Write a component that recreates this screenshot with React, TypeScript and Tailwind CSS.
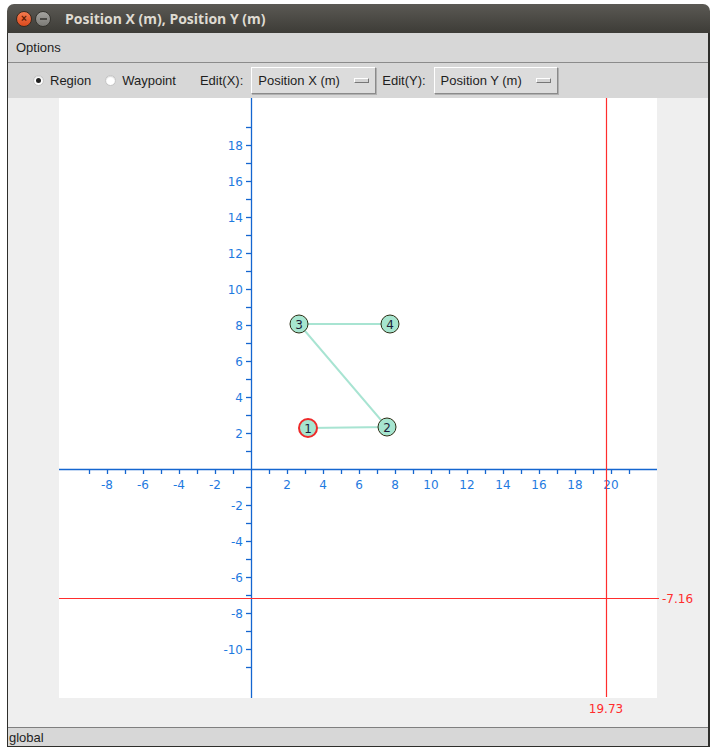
import React from "react";

const S = 18;
const OX = 251;
const OY = 469;
const px = (v: number) => OX + v * S;
const py = (v: number) => OY - v * S;

const nodes = [
  { id: 1, x: 308, y: 428, sel: true },
  { id: 2, x: 387, y: 427, sel: false },
  { id: 3, x: 299, y: 324, sel: false },
  { id: 4, x: 390, y: 324, sel: false },
];

function Chart() {
  const xt: number[] = [];
  for (let i = -9; i <= 21; i++) xt.push(i);
  const yt: number[] = [];
  for (let i = -11; i <= 19; i++) yt.push(i);
  const xl = [-8, -6, -4, -2, 2, 4, 6, 8, 10, 12, 14, 16, 18, 20];
  const yl = [-10, -8, -6, -4, -2, 2, 4, 6, 8, 10, 12, 14, 16, 18];
  const axis = "#1466d0";
  const lab = "#1f7ae0";
  const red = "#ff2d2d";
  const edge = "#a8e4d2";
  return (
    <svg
      className="absolute inset-0"
      width={700}
      height={629}
      viewBox="8 98 700 629"
      style={{ fontFamily: '"DejaVu Sans", sans-serif' }}
    >
      <line x1={OX + 0.5} y1={98} x2={OX + 0.5} y2={698} stroke={axis} strokeWidth={1.3} />
      <line x1={59} y1={OY + 0.5} x2={657} y2={OY + 0.5} stroke={axis} strokeWidth={1.3} />
      {xt.map((v) =>
        v === 0 ? null : (
          <line key={"xt" + v} x1={px(v) + 0.5} y1={OY} x2={px(v) + 0.5} y2={OY + 5} stroke={axis} strokeWidth={1.3} />
        )
      )}
      {yt.map((v) =>
        v === 0 ? null : (
          <line key={"yt" + v} x1={OX - 5} y1={py(v) + 0.5} x2={OX} y2={py(v) + 0.5} stroke={axis} strokeWidth={1.3} />
        )
      )}
      {xl.map((v) => (
        <text key={"xl" + v} x={px(v)} y={OY + 20} fontSize={12} fill={lab} textAnchor="middle">
          {v}
        </text>
      ))}
      {yl.map((v) => (
        <text key={"yl" + v} x={OX - 8} y={py(v) + 5} fontSize={12} fill={lab} textAnchor="end">
          {v}
        </text>
      ))}
      <line x1={59} y1={598.5} x2={659} y2={598.5} stroke={red} strokeWidth={1.2} />
      <line x1={606.5} y1={98} x2={606.5} y2={697} stroke={red} strokeWidth={1.2} />
      <text x={662} y={603} fontSize={12} fill={red}>
        -7.16
      </text>
      <text x={606} y={713} fontSize={12} fill={red} textAnchor="middle">
        19.73
      </text>
      <polyline
        points={`${nodes[0].x},${nodes[0].y} ${nodes[1].x},${nodes[1].y} ${nodes[2].x},${nodes[2].y} ${nodes[3].x},${nodes[3].y}`}
        fill="none"
        stroke={edge}
        strokeWidth={2}
      />
      {nodes.map((n) => (
        <g key={n.id}>
          <circle
            cx={n.x}
            cy={n.y}
            r={9}
            fill="#a6e5cf"
            stroke={n.sel ? "#ee2a2a" : "#2c2c14"}
            strokeWidth={n.sel ? 2 : 1}
          />
          <text x={n.x} y={n.y + 4.5} fontSize={12} fill="#1d1d3a" textAnchor="middle">
            {n.id}
          </text>
        </g>
      ))}
    </svg>
  );
}

function Radio({ checked, label }: { checked: boolean; label: string }) {
  return (
    <div className="flex items-center gap-[6px]">
      <div className="w-[11px] h-[11px] rounded-full bg-white border border-[#c4c4c4] flex items-center justify-center shadow-[inset_0_1px_1px_rgba(0,0,0,0.15)]">
        {checked && <div className="w-[5px] h-[5px] rounded-full bg-[#222]" />}
      </div>
      <span>{label}</span>
    </div>
  );
}

function Combo({ label, w }: { label: string; w: string }) {
  return (
    <div
      className={`${w} h-[27px] flex items-center justify-between pl-[6px] pr-[6px] bg-[#dcdcdc] border border-t-white border-l-white border-b-[#8a8a8a] border-r-[#8a8a8a] shadow-[1px_1px_0_#b0b0b0]`}
    >
      <span>{label}</span>
      <div className="w-[15px] h-[5px] bg-[#d4d4d4] border border-t-white border-l-white border-b-[#777] border-r-[#777]" />
    </div>
  );
}

export default function App() {
  return (
    <div
      className="w-[718px] h-[753px] bg-white pt-[4px] pl-[7px] text-[13px] text-[#1e1e1e]"
      style={{ fontFamily: '"Liberation Sans", sans-serif' }}
    >
      <div className="w-[703px] h-[743px] flex flex-col">
        <div className="h-[29px] rounded-t-[7px] bg-gradient-to-b from-[#5b5954] to-[#3d3c37] flex items-center pl-[9px] gap-[3px]">
          <div className="w-[16px] h-[16px] rounded-full bg-gradient-to-b from-[#f57a4e] to-[#dc4a1c] border border-[#3a2a20] flex items-center justify-center text-[#5a1a00] text-[10px] leading-none font-bold">
            ×
          </div>
          <div className="w-[16px] h-[16px] rounded-full bg-gradient-to-b from-[#a4a39f] to-[#7c7b77] border border-[#35342f] flex items-center justify-center">
            <div className="w-[7px] h-[2px] bg-[#4a4945]" />
          </div>
          <span
            className="ml-[11px] text-[#dfdbd2] font-bold text-[14px]"
            style={{ fontFamily: '"Open Sans", sans-serif' }}
          >
            Position X (m), Position Y (m)
          </span>
        </div>
        <div className="flex-1 flex flex-col border-l border-r-2 border-b border-[#2e2e2b] bg-[#efefef]">
          <div className="h-[30px] bg-[#d7d7d7] border-b border-[#8b8b8b] flex items-center pl-[8px]">
            Options
          </div>
          <div className="h-[35px] bg-[#d7d7d7] flex items-center pl-[25px]">
            <Radio checked label="Region" />
            <div className="ml-[14px]">
              <Radio checked={false} label="Waypoint" />
            </div>
            <span className="ml-[24px]">Edit(X):</span>
            <div className="ml-[8px]">
              <Combo label="Position X (m)" w="w-[125px]" />
            </div>
            <span className="ml-[6px]">Edit(Y):</span>
            <div className="ml-[8px]">
              <Combo label="Position Y (m)" w="w-[124px]" />
            </div>
          </div>
          <div className="relative h-[629px] bg-[#efefef] pl-[51px]">
            <div className="w-[598px] h-[600px] bg-white" />
            <Chart />
          </div>
          <div className="flex-1 bg-[#d7d7d7] border-t border-[#7f7f7f] flex items-center pl-[1px] leading-none">
            global
          </div>
        </div>
      </div>
    </div>
  );
}
